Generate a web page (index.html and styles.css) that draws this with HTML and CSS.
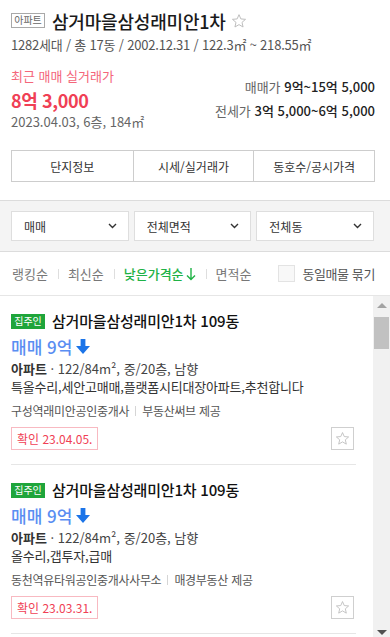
FILE: index.html
```html
<!DOCTYPE html>
<html lang="ko">
<head>
<meta charset="utf-8">
<title>삼거마을삼성래미안1차</title>
<link rel="stylesheet" href="styles.css">
</head>
<body>
<div class="page">
  <header class="summary">
    <div class="title-row">
      <span class="type-badge">아파트</span>
      <h1 class="complex-name">삼거마을삼성래미안1차</h1>
      <svg class="fav-icon" viewBox="0 0 24 24" width="16" height="16"><polygon points="12,2.5 14.8,8.9 21.8,9.5 16.5,14.1 18.1,21 12,17.4 5.9,21 7.5,14.1 2.2,9.5 9.2,8.9" fill="none" stroke="#b9b9b9" stroke-width="1.4" stroke-linejoin="round"/></svg>
    </div>
    <p class="complex-meta">1282세대 / 총 17동 / 2002.12.31 / 122.3㎡ ~ 218.55㎡</p>
    <div class="price-area">
      <div class="recent">
        <p class="recent-label">최근 매매 실거래가</p>
        <p class="recent-price">8억 3,000</p>
        <p class="recent-detail">2023.04.03, 6층, 184㎡</p>
      </div>
      <div class="ranges">
        <p class="range"><span class="range-label">매매가</span> <span class="range-value">9억~15억 5,000</span></p>
        <p class="range"><span class="range-label">전세가</span> <span class="range-value">3억 5,000~6억 5,000</span></p>
      </div>
    </div>
    <nav class="tabs">
      <a class="tab">단지정보</a>
      <a class="tab">시세/실거래가</a>
      <a class="tab">동호수/공시가격</a>
    </nav>
  </header>

  <div class="filters">
    <div class="select"><span>매매</span><svg class="chev" viewBox="0 0 9 6" width="9" height="6"><polyline points="1,1 4.5,4.5 8,1" fill="none" stroke="#333" stroke-width="1.4"/></svg></div>
    <div class="select"><span>전체면적</span><svg class="chev" viewBox="0 0 9 6" width="9" height="6"><polyline points="1,1 4.5,4.5 8,1" fill="none" stroke="#333" stroke-width="1.4"/></svg></div>
    <div class="select"><span>전체동</span><svg class="chev" viewBox="0 0 9 6" width="9" height="6"><polyline points="1,1 4.5,4.5 8,1" fill="none" stroke="#333" stroke-width="1.4"/></svg></div>
  </div>

  <div class="sort-bar">
    <span class="sort">랭킹순</span>
    <span class="sort-sep"></span>
    <span class="sort">최신순</span>
    <span class="sort-sep"></span>
    <span class="sort sort-active">낮은가격순 <svg class="sort-arrow" viewBox="0 0 10 14" width="10" height="14"><path d="M5 1 V12.5 M1 8.5 L5 12.5 L9 8.5" fill="none" stroke="#1fb246" stroke-width="1.4"/></svg></span>
    <span class="sort-sep"></span>
    <span class="sort">면적순</span>
    <label class="group-check"><span class="checkbox"></span>동일매물 묶기</label>
  </div>

  <div class="list-wrap">
    <ul class="articles">
      <li class="article">
        <div class="article-title"><span class="owner-badge">집주인</span><strong class="article-name">삼거마을삼성래미안1차 109동</strong></div>
        <div class="article-price">매매 9억<svg class="down-icon" viewBox="0 0 14 16" width="14" height="16"><path d="M4.6 0 H9.4 V7 H14 L7 15 L0 7 H4.6 Z" fill="#1b74e8"/></svg></div>
        <p class="article-spec"><span class="spec-type">아파트</span> · 122/84m², 중/20층, 남향</p>
        <p class="article-desc">특올수리,세안고매매,플랫폼시티대장아파트,추천합니다</p>
        <p class="article-agent">구성역래미안공인중개사<span class="agent-sep"></span>부동산써브 제공</p>
        <div class="article-foot">
          <span class="confirm">확인 23.04.05.</span>
          <span class="save-btn"><svg viewBox="0 0 24 24" width="15" height="15"><polygon points="12,2.5 14.8,8.9 21.8,9.5 16.5,14.1 18.1,21 12,17.4 5.9,21 7.5,14.1 2.2,9.5 9.2,8.9" fill="none" stroke="#bdbdbd" stroke-width="1.4" stroke-linejoin="round"/></svg></span>
        </div>
      </li>
      <li class="article">
        <div class="article-title"><span class="owner-badge">집주인</span><strong class="article-name">삼거마을삼성래미안1차 109동</strong></div>
        <div class="article-price">매매 9억<svg class="down-icon" viewBox="0 0 14 16" width="14" height="16"><path d="M4.6 0 H9.4 V7 H14 L7 15 L0 7 H4.6 Z" fill="#1b74e8"/></svg></div>
        <p class="article-spec"><span class="spec-type">아파트</span> · 122/84m², 중/20층, 남향</p>
        <p class="article-desc">올수리,갭투자,급매</p>
        <p class="article-agent">동천역유타워공인중개사사무소<span class="agent-sep"></span>매경부동산 제공</p>
        <div class="article-foot">
          <span class="confirm">확인 23.03.31.</span>
          <span class="save-btn"><svg viewBox="0 0 24 24" width="15" height="15"><polygon points="12,2.5 14.8,8.9 21.8,9.5 16.5,14.1 18.1,21 12,17.4 5.9,21 7.5,14.1 2.2,9.5 9.2,8.9" fill="none" stroke="#bdbdbd" stroke-width="1.4" stroke-linejoin="round"/></svg></span>
        </div>
      </li>
    </ul>
    <div class="scrollbar">
      <span class="sb-up"></span>
      <span class="sb-thumb"></span>
      <span class="sb-track"></span>
      <span class="sb-down"></span>
    </div>
  </div>
</div>
</body>
</html>
```

FILE: styles.css
```css
* { box-sizing: border-box; }
html, body { margin: 0; padding: 0; background: #fff; }
body {
  width: 390px;
  height: 637px;
  overflow: hidden;
  font-family: "Noto Sans CJK KR", "Noto Sans", sans-serif;
  color: #222;
}
p, h1, ul { margin: 0; padding: 0; }
ul { list-style: none; }

.page { width: 390px; }

/* summary */
.summary { padding: 10px 15px 18px 11px; }
.title-row { display: flex; align-items: center; height: 22px; }
.type-badge {
  display: inline-flex; align-items: center; justify-content: center;
  width: 34px; height: 15px;
  border: 1px solid #a9a9a9;
  font-size: 10px; color: #666; line-height: 1;
  margin-top: -2px;
}
.complex-name {
  font-size: 18px; font-weight: 500; line-height: 22px; color: #1a1a1a;
  margin-left: 7px; letter-spacing: -0.2px;
}
.fav-icon { margin-left: 5px; margin-top: -1px; }
.complex-meta { margin-top: 4px; font-size: 13px; line-height: 18px; color: #555; letter-spacing: -0.2px; }

.price-area { display: flex; justify-content: space-between; }
.recent-label { margin-top: 13px; font-size: 13px; line-height: 18px; color: #f4667a; }
.recent-price { margin-top: 3px; font-size: 18px; line-height: 24px; font-weight: 700; color: #f03f55; letter-spacing: -0.4px; }
.recent-detail { margin-top: 1px; font-size: 13px; line-height: 18px; color: #666; }
.ranges { padding-top: 21px; text-align: right; }
.range { font-size: 13px; line-height: 24px; color: #222; }
.range-label { color: #666; }
.range-value { font-weight: 500; }

.tabs { display: grid; grid-template-columns: 1fr 1fr 1fr; margin-top: 19px; border: 1px solid #cdcdcd; height: 32px; }
.tab { display: flex; align-items: center; justify-content: center; font-size: 12px; color: #333; }
.tab + .tab { border-left: 1px solid #cdcdcd; }

/* filters */
.filters {
  display: grid; grid-template-columns: 1fr 1fr 1fr; gap: 5px;
  padding: 10px 16px 10px 11px;
  background: #f4f4f4;
  border-top: 1px solid #dcdcdc; border-bottom: 1px solid #dcdcdc;
}
.select {
  display: flex; align-items: center; justify-content: space-between;
  height: 30px; padding: 0 11px 0 12px;
  background: #fff; border: 1px solid #dedede;
  font-size: 12px; color: #333;
}
.chev { display: block; }

/* sort */
.sort-bar {
  display: flex; align-items: center; height: 44px;
  padding: 0 15px 0 12px;
  border-bottom: 1px solid #e6e6e6;
  font-size: 13px; color: #777;
}
.sort { display: inline-flex; align-items: center; }
.sort-sep { width: 1px; height: 10px; background: #dedede; margin: 0 9px 0 10px; }
.sort-active { color: #1fb246; font-weight: 500; }
.sort-arrow { margin-left: 2px; }
.group-check { margin-left: auto; display: flex; align-items: center; color: #555; letter-spacing: -0.4px; }
.checkbox { width: 17px; height: 17px; border: 1px solid #e3e3e3; background: #f8f8f8; margin-right: 7px; }

/* list */
.list-wrap { display: flex; height: 350px; overflow: hidden; }
.articles { flex: 1; padding: 0 17px 0 11px; }
.article { padding: 15px 0 14px; border-bottom: 1px solid #e6e6e6; height: 169px; }
.article-title { display: flex; align-items: center; height: 20px; }
.owner-badge {
  display: inline-flex; align-items: center; justify-content: center;
  width: 34px; height: 15px; background: #1fa53b; color: #fff;
  font-size: 10px; line-height: 1;
}
.article-name { margin-left: 7px; font-size: 15px; font-weight: 500; line-height: 20px; color: #111; letter-spacing: -0.2px; }
.article-price {
  display: flex; align-items: center; margin-top: 3px; height: 24px;
  font-size: 17px; font-weight: 500; color: #5a8ef2;
}
.down-icon { margin-left: 4px; margin-top: 1px; }
.article-spec { margin-top: 2px; font-size: 13px; line-height: 18px; color: #444; }
.spec-type { color: #333; font-weight: 700; }
.article-desc { font-size: 13px; line-height: 18px; color: #333; letter-spacing: -0.2px; }
.article-agent { margin-top: 6px; font-size: 12px; line-height: 17px; color: #555; display: flex; align-items: center; letter-spacing: -0.3px; }
.agent-sep { width: 1px; height: 10px; background: #d5d5d5; margin: 0 6px; }
.article-foot { margin-top: 8px; display: flex; justify-content: space-between; align-items: center; }
.confirm {
  display: inline-flex; align-items: center; height: 23px; padding: 0 5px;
  border: 1px solid #f8b9c1; color: #f03f55; font-size: 12px;
}
.save-btn {
  display: flex; align-items: center; justify-content: center;
  width: 23px; height: 23px; margin-right: 2px; border: 1px solid #cfcfcf;
}

/* fake scrollbar */
.scrollbar { width: 17px; background: #f1f1f1; display: flex; flex-direction: column; align-items: center; }
.sb-up { width: 0; height: 0; margin-top: 7px; border-left: 5px solid transparent; border-right: 5px solid transparent; border-bottom: 5px solid #a3a3a3; }
.sb-thumb { width: 15px; height: 32px; margin-top: 9px; background: #c1c1c1; }
.sb-track { flex: 1; }
.sb-down { width: 0; height: 0; margin-bottom: 11px; border-left: 5px solid transparent; border-right: 5px solid transparent; border-top: 5px solid #505050; }
```
